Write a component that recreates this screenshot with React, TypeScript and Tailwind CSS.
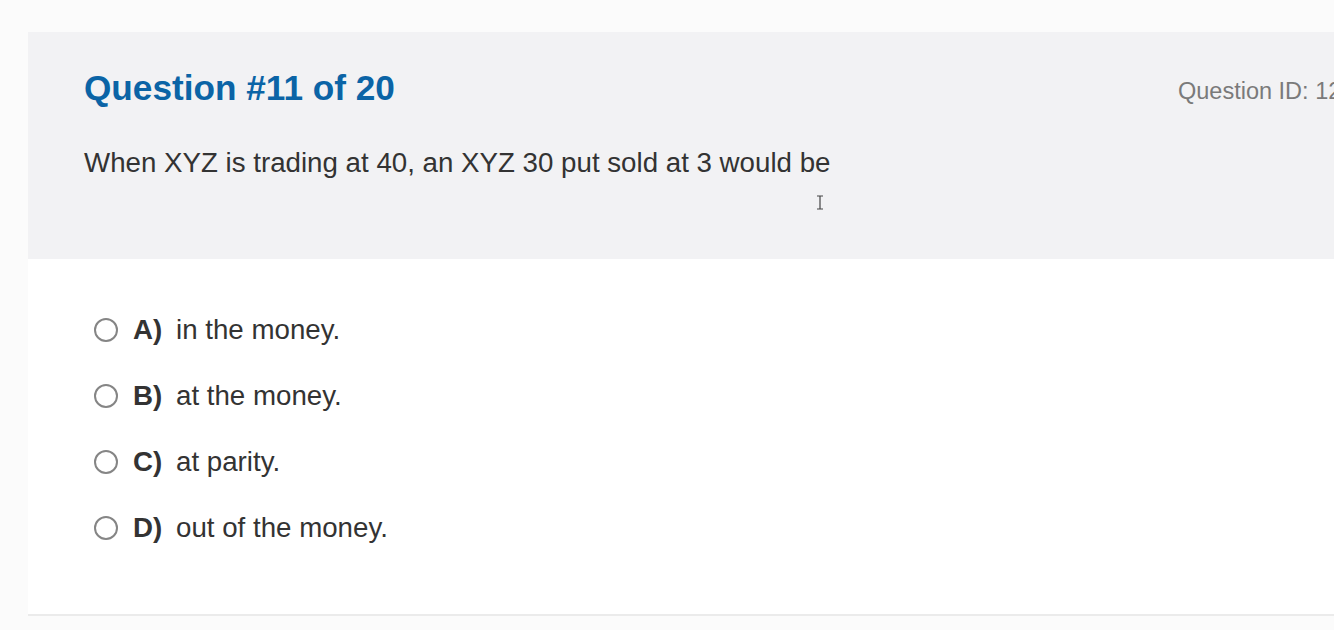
import React from "react";

const options = [
  { letter: "A)", text: "in the money." },
  { letter: "B)", text: "at the money." },
  { letter: "C)", text: "at parity." },
  { letter: "D)", text: "out of the money." },
];

export default function App() {
  return (
    <div
      className="w-[1334px] h-[630px] overflow-hidden bg-[#fbfbfb] pt-[32px] pl-[28px]"
      style={{ fontFamily: '"Liberation Sans", Arial, sans-serif' }}
    >
      <div className="w-[1400px] bg-white border-b-2 border-[#ebebeb]">
        <div className="relative h-[227px] bg-[#f2f2f4] pl-[56px] pt-[36px]">
          <div className="flex items-center h-[40px]">
            <div className="w-[1094px] text-[35.2px] leading-[40px] font-bold text-[#0b64a6] whitespace-nowrap">
              Question #11 of 20
            </div>
            <div className="mt-[6px] text-[23.5px] leading-[28px] text-[#7a7a7a] whitespace-nowrap">
              Question ID: 1234567
            </div>
          </div>
          <div className="mt-[39px] text-[27.7px] leading-[32px] text-[#333333] whitespace-nowrap">
            When XYZ is trading at 40, an XYZ 30 put sold at 3 would be
          </div>
          <svg
            className="absolute left-[788px] top-[163px]"
            width="8"
            height="15"
            viewBox="0 0 8 15"
          >
            <path d="M1 1h6M4 1v13M1 14h6" stroke="#444" strokeWidth="1.2" fill="none" />
          </svg>
        </div>
        <div className="pt-[38px] pb-[53px] pl-[66px]">
          {options.map((o) => (
            <div key={o.letter} className="flex items-center h-[66px]">
              <span className="w-[24px] h-[24px] rounded-full border-2 border-[#858585] bg-white shrink-0" />
              <span className="ml-[15px] w-[43px] text-[27.7px] font-bold text-[#333333]">
                {o.letter}
              </span>
              <span className="text-[27.7px] text-[#333333] whitespace-nowrap">{o.text}</span>
            </div>
          ))}
        </div>
      </div>
    </div>
  );
}
